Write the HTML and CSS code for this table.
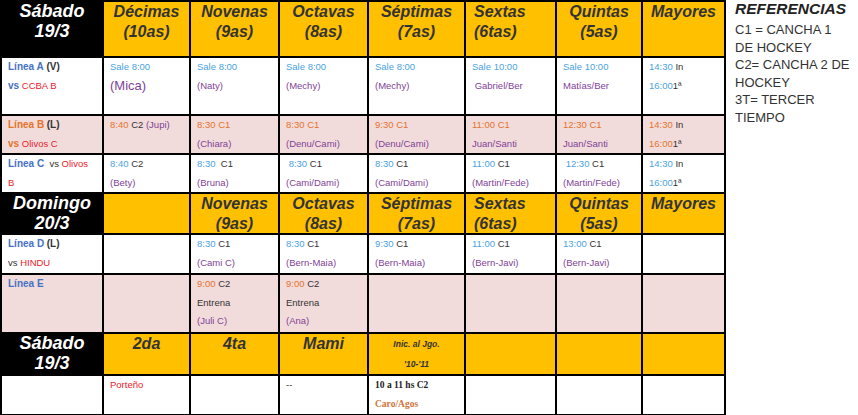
FILE: index.html
```html
<!DOCTYPE html>
<html lang="es">
<head>
<meta charset="utf-8">
<title>Fixture</title>
<link rel="stylesheet" href="styles.css">
</head>
<body>
<div class="page">
  <table class="fixture">
    <colgroup>
      <col class="c0"><col class="c1"><col class="c2"><col class="c3"><col class="c4"><col class="c5"><col class="c6"><col class="c7">
    </colgroup>
    <tbody>
      <tr class="r-head1">
        <th class="day">Sábado<br>19/3</th>
        <th class="cat">Décimas<br>(10as)</th>
        <th class="cat">Novenas<br>(9as)</th>
        <th class="cat">Octavas<br>(8as)</th>
        <th class="cat">Séptimas<br>(7as)</th>
        <th class="cat left">Sextas<br>(6tas)</th>
        <th class="cat">Quintas<br>(5as)</th>
        <th class="cat">Mayores</th>
      </tr>
      <tr class="r-a">
        <td><span class="team blue">Línea A</span> <span class="team dark">(V)</span><br><span class="team blue">vs</span> <span class="red">CCBA B</span></td>
        <td><span class="sky">Sale 8:00</span><br><span class="purple big">(Mica)</span></td>
        <td><span class="sky">Sale 8:00</span><br><span class="purple">(Naty)</span></td>
        <td><span class="sky">Sale 8:00</span><br><span class="purple">(Mechy)</span></td>
        <td><span class="sky">Sale 8:00</span><br><span class="purple">(Mechy)</span></td>
        <td><span class="sky">Sale 10:00</span><br><span class="purple">&nbsp;Gabriel/Ber</span></td>
        <td><span class="sky">Sale 10:00</span><br><span class="purple">Matías/Ber</span></td>
        <td><span class="sky">14:30</span> <span class="dark">In</span><br><span class="sky">16:00</span><span class="dark">1ª</span></td>
      </tr>
      <tr class="r-b pink">
        <td><span class="team orange">Línea B</span> <span class="team dark">(L)</span><br><span class="team orange">vs</span> <span class="red">Olivos C</span></td>
        <td><span class="orange">8:40</span> <span class="dark">C2</span> <span class="purple">(Jupi)</span></td>
        <td><span class="orange">8:30 C1</span><br><span class="purple">(Chiara)</span></td>
        <td><span class="orange">8:30 C1</span><br><span class="purple">(Denu/Cami)</span></td>
        <td><span class="orange">9:30 C1</span><br><span class="purple">(Denu/Cami)</span></td>
        <td><span class="orange">11:00 C1</span><br><span class="purple">Juan/Santi</span></td>
        <td><span class="orange">12:30 C1</span><br><span class="purple">Juan/Santi</span></td>
        <td><span class="orange">14:30</span> <span class="dark">In</span><br><span class="orange">16:00</span><span class="dark">1ª</span></td>
      </tr>
      <tr class="r-c">
        <td><span class="team blue">Línea C</span>&nbsp; <span class="dark">vs</span> <span class="red">Olivos B</span></td>
        <td><span class="sky">8:40</span> <span class="dark">C2</span><br><span class="purple">(Bety)</span></td>
        <td><span class="sky">8:30</span>&nbsp; <span class="dark">C1</span><br><span class="purple">(Bruna)</span></td>
        <td>&nbsp;<span class="sky">8:30</span> <span class="dark">C1</span><br><span class="purple">(Cami/Dami)</span></td>
        <td><span class="sky">8:30</span> <span class="dark">C1</span><br><span class="purple">(Cami/Dami)</span></td>
        <td><span class="sky">11:00</span> <span class="dark">C1</span><br><span class="purple">(Martin/Fede)</span></td>
        <td>&nbsp;<span class="sky">12:30</span> <span class="dark">C1</span><br><span class="purple">(Martin/Fede)</span></td>
        <td><span class="sky">14:30</span> <span class="dark">In</span><br><span class="sky">16:00</span><span class="dark">1ª</span></td>
      </tr>
      <tr class="r-head2">
        <th class="day">Domingo<br>20/3</th>
        <th class="cat"></th>
        <th class="cat">Novenas<br>(9as)</th>
        <th class="cat">Octavas<br>(8as)</th>
        <th class="cat">Séptimas<br>(7as)</th>
        <th class="cat left">Sextas<br>(6tas)</th>
        <th class="cat">Quintas<br>(5as)</th>
        <th class="cat">Mayores</th>
      </tr>
      <tr class="r-d">
        <td><span class="team blue">Línea D</span> <span class="team dark">(L)</span><br><span class="dark">vs</span> <span class="red">HINDU</span></td>
        <td></td>
        <td><span class="sky">8:30</span> <span class="dark">C1</span><br><span class="purple">(Cami C)</span></td>
        <td><span class="sky">8:30</span> <span class="dark">C1</span><br><span class="purple">(Bern-Maia)</span></td>
        <td><span class="sky">9:30</span> <span class="dark">C1</span><br><span class="purple">(Bern-Maia)</span></td>
        <td><span class="sky">11:00</span> <span class="dark">C1</span><br><span class="purple">(Bern-Javi)</span></td>
        <td><span class="sky">13:00</span> <span class="dark">C1</span><br><span class="purple">(Bern-Javi)</span></td>
        <td></td>
      </tr>
      <tr class="r-e pink">
        <td><span class="team blue">Línea E</span></td>
        <td></td>
        <td><span class="orange">9:00</span> <span class="dark">C2</span><br><span class="dark">Entrena</span><br><span class="purple">(Juli C)</span></td>
        <td><span class="orange">9:00</span> <span class="dark">C2</span><br><span class="dark">Entrena</span><br><span class="purple">(Ana)</span></td>
        <td></td>
        <td></td>
        <td></td>
        <td></td>
      </tr>
      <tr class="r-head3">
        <th class="day">Sábado<br>19/3</th>
        <th class="cat">2da</th>
        <th class="cat">4ta</th>
        <th class="cat">Mami</th>
        <th class="cat small">Inic. al Jgo.<br>'10-'11</th>
        <th class="cat"></th>
        <th class="cat"></th>
        <th class="cat"></th>
      </tr>
      <tr class="r-last">
        <td></td>
        <td><span class="red">Porteño</span></td>
        <td></td>
        <td><span class="dark">--</span></td>
        <td class="serif"><span class="ink">10 a 11 hs C2</span><br><span class="brown">Caro/Agos</span></td>
        <td></td>
        <td></td>
        <td></td>
      </tr>
    </tbody>
  </table>
  <div class="refs">
    <h2 class="refs-title">REFERENCIAS</h2>
    <p class="refs-text">C1 = CANCHA 1 DE HOCKEY<br>C2= CANCHA 2 DE HOCKEY<br>3T= TERCER TIEMPO</p>
  </div>
</div>
</body>
</html>
```
FILE: styles.css
```css
html, body {
  margin: 0;
  padding: 0;
  background: #ffffff;
}

.page {
  display: flex;
  align-items: flex-start;
  gap: 9px;
  font-family: "Liberation Sans", Arial, sans-serif;
}

.fixture {
  border-collapse: collapse;
  table-layout: fixed;
  width: 724px;
  flex: none;
}

.c0 { width: 102px; }
.c1 { width: 87px; }
.c2 { width: 89px; }
.c3 { width: 89px; }
.c4 { width: 97px; }
.c5 { width: 91px; }
.c6 { width: 86px; }
.c7 { width: 83px; }

.fixture th,
.fixture td {
  border: 2px solid #000;
  vertical-align: top;
  padding: 0 6px;
  overflow: hidden;
}

.fixture td {
  font-size: 9.5px;
  line-height: 18.5px;
  color: #333;
  padding-top: 0;
}

.fixture th {
  font-style: italic;
  font-weight: bold;
  text-align: center;
  padding-top: 0;
}

.day {
  background: #000;
  color: #fff;
  font-size: 18px;
  line-height: 19.5px;
}

.cat {
  background: #ffc000;
  color: #333;
  font-size: 16px;
  line-height: 19.5px;
}

.cat.left {
  text-align: left;
  padding-left: 8px;
}

.cat.small {
  font-size: 8.5px;
  line-height: 19.5px;
  padding-top: 1px;
}

.r-head1 { height: 56px; }
.r-a { height: 58px; }
.r-b { height: 39px; }
.r-c { height: 39px; }
.r-head2 { height: 41px; }
.r-d { height: 40px; }
.r-e { height: 59px; }
.r-head3 { height: 41px; }
.r-last { height: 40px; }

.pink td { background: #f2dcdb; }

.team { font-weight: bold; font-size: 10px; }
.blue { color: #4472c4; }
.dark { color: #333; }
.red { color: #e8212b; }
.sky { color: #4aa3df; }
.purple { color: #7f3f98; }
.orange { color: #e4732c; }
.big { font-size: 13px; }

.serif {
  font-family: "Liberation Serif", "Times New Roman", serif;
  font-weight: bold;
  font-size: 9px;
}
.ink { color: #222; }
.brown { color: #d0733a; }

.refs {
  color: #333;
}

.refs-title {
  margin: 0;
  font-size: 15.5px;
  font-style: italic;
  font-weight: bold;
  line-height: 17px;
  color: #222;
}

.refs-text {
  margin: 4px 0 0;
  width: 118px;
  font-size: 13px;
  line-height: 17.5px;
}
```
